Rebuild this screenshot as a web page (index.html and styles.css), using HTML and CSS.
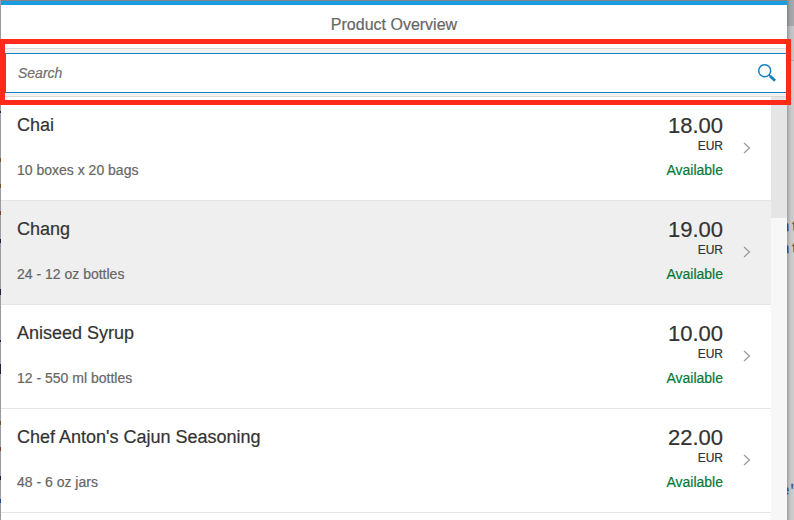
FILE: index.html
```html
<!DOCTYPE html>
<html lang="en">
<head>
<meta charset="utf-8">
<title>Product Overview</title>
<link rel="stylesheet" href="styles.css">
</head>
<body>
<div class="backdrop" aria-hidden="true">
  <div class="left-code">
    <i class="speck s1"></i><i class="speck s2 brown"></i><i class="speck s3 brown"></i><i class="speck s4 red"></i><i class="speck s5"></i><i class="speck s6"></i><i class="speck s7"></i><i class="speck s8"></i><i class="speck s9 brown"></i><i class="speck s10 red"></i><i class="speck s11"></i><i class="speck s12 blue"></i>
  </div>
  <div class="right-code">
    <span class="code c1">n<b>t</b></span>
    <span class="code c2">n<b>t</b></span>
    <span class="code c3">e<b>"</b></span>
  </div>
</div>
<main class="dialog">
  <header class="title">Product Overview</header>
  <div class="toolbar">
    <div class="search">
      <span class="placeholder">Search</span>
      <svg class="lens" width="20" height="20" viewBox="0 0 20 20"><circle cx="7.7" cy="7.7" r="6" fill="none" stroke="#1480c4" stroke-width="1.5"/><path d="M11.8 11.8L13.5 13.5" stroke="#1480c4" stroke-width="1.3"/><path d="M13 13L18 17.7" stroke="#1480c4" stroke-width="2.8"/></svg>
    </div>
  </div>
  <div class="content">
    <ul class="list">
      <li class="item"><div class="info"><h2>Chai</h2><p>10 boxes x 20 bags</p></div><div class="price"><strong>18.00</strong><span>EUR</span><em>Available</em></div><svg class="chevron" width="8" height="12" viewBox="0 0 8 12"><path d="M1 1L6.5 6L1 11"/></svg></li>
      <li class="item hovered"><div class="info"><h2>Chang</h2><p>24 - 12 oz bottles</p></div><div class="price"><strong>19.00</strong><span>EUR</span><em>Available</em></div><svg class="chevron" width="8" height="12" viewBox="0 0 8 12"><path d="M1 1L6.5 6L1 11"/></svg></li>
      <li class="item"><div class="info"><h2>Aniseed Syrup</h2><p>12 - 550 ml bottles</p></div><div class="price"><strong>10.00</strong><span>EUR</span><em>Available</em></div><svg class="chevron" width="8" height="12" viewBox="0 0 8 12"><path d="M1 1L6.5 6L1 11"/></svg></li>
      <li class="item"><div class="info"><h2>Chef Anton's Cajun Seasoning</h2><p>48 - 6 oz jars</p></div><div class="price"><strong>22.00</strong><span>EUR</span><em>Available</em></div><svg class="chevron" width="8" height="12" viewBox="0 0 8 12"><path d="M1 1L6.5 6L1 11"/></svg></li>
    </ul>
    <div class="scrollbar"><div class="thumb"></div></div>
  </div>
</main>
<div class="highlight"></div>
</body>
</html>
```

FILE: styles.css
```css
* { box-sizing: border-box; }
body {
  margin: 0;
  height: 520px;
  position: relative;
  overflow: hidden;
  background: #808488;
  font-family: "Liberation Sans", Arial, sans-serif;
}
.left-code { position: absolute; left: 0; top: 0; width: 1px; height: 520px; background: #9b9ca2; }
.speck { position: absolute; left: 0; width: 1px; height: 4px; background: #222034; }
.brown { background: #76522c; }
.red { background: #803b30; }
.blue { background: #234a8c; }
.s1 { top: 111px; height: 2px; }
.s2 { top: 158px; }
.s3 { top: 184px; }
.s4 { top: 211px; }
.s5 { top: 239px; }
.s6 { top: 289px; height: 6px; }
.s7 { top: 340px; height: 2px; }
.s8 { top: 364px; height: 10px; }
.s9 { top: 421px; }
.s10 { top: 447px; }
.s11 { top: 476px; }
.s12 { top: 499px; }
.right-code {
  position: absolute;
  left: 787px;
  top: 0;
  width: 7px;
  height: 520px;
  overflow: hidden;
  background:
    linear-gradient(90deg, rgba(0,0,0,.24), rgba(0,0,0,.06) 3px, transparent 7px),
    linear-gradient(#a9abb1 0 26px, #c4c8ca 26px 60px, #adadad 60px 61px, #d0d0d0 61px);
}
.code { position: absolute; left: -6px; font: 14px/16px "Liberation Mono", monospace; letter-spacing: 1.5px; color: #233c8a; white-space: nowrap; -webkit-text-stroke: .3px; }
.code b { font-weight: 400; color: #655643; }
.c1 { top: 219px; }
.c2 { top: 241px; }
.c3 { top: 483px; left: -6px; letter-spacing: 0; color: #155b89; }
.c3 b { color: #3c4c9a; }
.dialog {
  position: relative;
  width: 786px;
  height: 519px;
  margin: 1px 0 0 1px;
  background: #fff;
  border-top: 4px solid #1b9ce0;
  display: flex;
  flex-direction: column;
  -webkit-text-stroke: .2px;
}
.title { height: 43px; padding-top: 10px; text-align: center; font-size: 16px; line-height: 20px; color: #666; }
.toolbar { height: 49px; padding: 4px 0 3px 4px; background: #f2f2f2; border: solid #d9d9d9; border-width: 1px 0; }
.search { height: 40px; display: flex; align-items: center; justify-content: space-between; padding: 0 9px 0 12px; border: 1px solid #1480c4; background: #fff; }
.placeholder { font-size: 14px; font-style: italic; color: #707070; }
.content { flex: 1; min-height: 0; display: flex; overflow: hidden; }
.list { flex: 1; margin: 0; padding: 0; list-style: none; }
.item { height: 104px; display: flex; padding: 0 20px 0 16px; border-bottom: 1px solid #e5e5e5; }
.hovered { background: #efefef; }
.info { flex: 1; padding-top: 16px; }
h2 { margin: 0; font-size: 18px; line-height: 24px; font-weight: 400; color: #333; }
p { margin: 23px 0 0; font-size: 14px; line-height: 20px; color: #666; }
.price { display: flex; flex-direction: column; align-items: flex-end; padding-top: 16px; color: #333; }
.price strong { font-size: 22px; line-height: 25px; font-weight: 400; }
.price span { font-size: 12px; line-height: 16px; }
.price em { margin-top: 6px; font-size: 14px; line-height: 20px; font-style: normal; color: #077733; }
.chevron { margin: 45px 0 0 20px; fill: none; stroke: #999; stroke-width: 1.2; }
.scrollbar { width: 16px; background: #f7f7f7; }
.thumb { height: 121px; background: #e5e5e5; }
.highlight { position: absolute; left: 0; top: 39px; width: 791px; height: 66px; border: 5px solid #ff291c; }
```
